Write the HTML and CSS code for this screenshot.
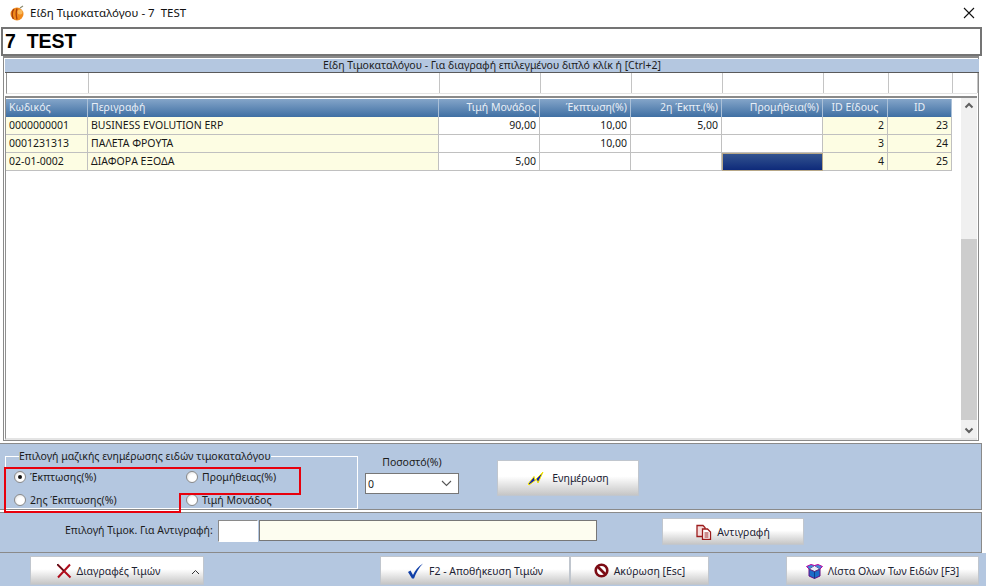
FILE: index.html
```html
<!DOCTYPE html>
<html lang="el">
<head>
<meta charset="utf-8">
<title>Είδη Τιμοκαταλόγου - 7 TEST</title>
<link rel="stylesheet" href="styles.css">
</head>
<body>
<div class="window">
  <header class="titlebar">
    <svg class="app-icon" width="16" height="16" viewBox="0 0 16 16"><circle cx="8" cy="9" r="6.5" fill="#f08a1c"/><path d="M5 4c-2 2-2.500 7-.5 10M8 3.500c-1 3-1 7 0 11" stroke="#a8400c" stroke-width="1.300" fill="none"/><circle cx="11" cy="7" r="2.500" fill="#f9b85a"/><path d="M11 3l3-2" stroke="#8a8a70" stroke-width="1.200"/></svg>
    <span class="title-text">Είδη Τιμοκαταλόγου - 7  TEST</span>
    <svg class="close" width="12" height="12" viewBox="0 0 12 12"><path d="M1 1l10 10M11 1L1 11" stroke="#111" stroke-width="1.100"/></svg>
  </header>
  <div class="heading">7  TEST</div>
  <section class="gridpanel">
    <div class="caption">Είδη Τιμοκαταλόγου - Για διαγραφή επιλεγμένου διπλό κλίκ ή [Ctrl+2]</div>
    <div class="filters">
      <span></span><span></span><span></span><span></span><span></span><span></span><span></span><span></span><span></span>
    </div>
    <div class="gridbody">
      <div class="table">
        <div class="row head">
          <span class="cell">Κωδικός</span><span class="cell">Περιγραφή</span><span class="cell num">Τιμή Μονάδος</span><span class="cell num">Έκπτωση(%)</span><span class="cell num">2η Έκπτ.(%)</span><span class="cell num">Προμήθεια(%)</span><span class="cell ctr">ID Είδους</span><span class="cell ctr">ID</span>
        </div>
        <div class="row">
          <span class="cell ro">0000000001</span><span class="cell ro">BUSINESS EVOLUTION ERP</span><span class="cell num">90,00</span><span class="cell num">10,00</span><span class="cell num">5,00</span><span class="cell num"></span><span class="cell num ro">2</span><span class="cell num ro">23</span>
        </div>
        <div class="row">
          <span class="cell ro">0001231313</span><span class="cell ro">ΠΑΛΕΤΑ ΦΡΟΥΤΑ</span><span class="cell num"></span><span class="cell num">10,00</span><span class="cell num"></span><span class="cell num"></span><span class="cell num ro">3</span><span class="cell num ro">24</span>
        </div>
        <div class="row">
          <span class="cell ro">02-01-0002</span><span class="cell ro">ΔΙΑΦΟΡΑ ΕΞΟΔΑ</span><span class="cell num">5,00</span><span class="cell num"></span><span class="cell num"></span><span class="cell num selected"></span><span class="cell num ro">4</span><span class="cell num ro">25</span>
        </div>
      </div>
      <div class="scrollbar">
        <svg class="chev" width="16" height="16" viewBox="0 0 16 16"><path d="M4.500 9.500L8 6l3.500 3.500" stroke="#606060" stroke-width="2" fill="none"/></svg>
        <div class="track"><div class="thumb"></div></div>
        <svg class="chev" width="16" height="16" viewBox="0 0 16 16"><path d="M4.500 6.500L8 10l3.500-3.500" stroke="#606060" stroke-width="2" fill="none"/></svg>
      </div>
    </div>
  </section>
  <section class="panel update">
    <fieldset class="mass">
      <legend>Επιλογή μαζικής ενημέρωσης ειδών τιμοκαταλόγου</legend>
      <label class="opt"><span class="radio on"></span>Έκπτωσης(%)</label>
      <label class="opt"><span class="radio"></span>Προμήθειας(%)</label>
      <label class="opt"><span class="radio"></span>2ης Έκπτωσης(%)</label>
      <label class="opt"><span class="radio"></span>Τιμή Μονάδος</label>
      <svg class="redmark" width="300" height="48" viewBox="0 0 300 48"><path d="M1 1H296V27H176V45H1Z" fill="none" stroke="#e8000c" stroke-width="2"/></svg>
    </fieldset>
    <div class="percent">
      <span class="percent-label">Ποσοστό(%)</span>
      <div class="select">0<svg width="11" height="7" viewBox="0 0 11 7"><path d="M1 1l4.500 4.500L10 1" stroke="#555" stroke-width="1.100" fill="none"/></svg></div>
    </div>
    <button class="btn btn-update">
      <svg width="18" height="16" viewBox="0 0 18 16"><path d="M1 14L7 6.500l1 3.500L16 2l-5 11-1.500-3.500L2 15z" fill="#1420b0" stroke="#f5e800" stroke-width="1"/></svg>
      Ενημέρωση
    </button>
  </section>
  <section class="panel copy">
    <span class="copy-label">Επιλογή Τιμοκ. Για Αντιγραφή:</span>
    <span class="code-input"></span>
    <span class="name-input"></span>
    <button class="btn btn-copy">
      <svg width="16" height="16" viewBox="0 0 16 16"><path d="M1 1.500h6l2 2v9H1z" fill="#f6dcdc" stroke="#9c1c1c" stroke-width="1.300"/><path d="M6.500 5h5l3 3v7.500h-8z" fill="#fff" stroke="#9c1c1c" stroke-width="1.300"/><path d="M8.500 9h4M8.500 11h4M8.500 13h4" stroke="#9c1c1c"/></svg>
      Αντιγραφή
    </button>
  </section>
  <footer class="footer">
    <button class="btn btn-delete">
      <svg width="16" height="16" viewBox="0 0 16 16"><path d="M1.500 1.500l13 13M14 1.500L2 14.500" stroke="#b00c1c" stroke-width="2"/><path d="M1 1l7 7" stroke="#222" stroke-width="1"/></svg>
      <span>Διαγραφές Τιμών</span>
      <svg class="caret" width="9" height="6" viewBox="0 0 9 6"><path d="M1 5l3.500-3.500L8 5" stroke="#333" fill="none"/></svg>
    </button>
    <button class="btn btn-save">
      <svg width="17" height="16" viewBox="0 0 17 16"><path d="M1 9l2.500-1.500L6 12C8 7.500 11 3.500 16 0.500 11.500 5 9 10 7 15.500H5z" fill="#0f3fa8"/></svg>
      F2 - Αποθήκευση Τιμών
    </button>
    <button class="btn btn-cancel">
      <svg width="15" height="15" viewBox="0 0 15 15"><circle cx="7.500" cy="7.500" r="5.800" fill="#fff" stroke="#7c0c14" stroke-width="2.600"/><path d="M3.500 3.500l8 8" stroke="#7c0c14" stroke-width="2.600"/></svg>
      Ακύρωση [Esc]
    </button>
    <button class="btn btn-list">
      <svg width="17" height="16" viewBox="0 0 17 16"><path d="M3 6l5.500 2.500L14 6v7l-5.500 2.500L3 13z" fill="#1c6cc8" stroke="#6a0a80"/><path d="M3 6l5.500-3.500L14 6 8.500 8.500z" fill="#e8eef8" stroke="#5a2a80"/><path d="M3 6L0.500 3.500 5 1.500 8.500 2.500M14 6l2.500-2.500L12 1.500 8.500 2.500" fill="#3c8ad8" stroke="#c000a0"/><path d="M8.500 8.500v7" stroke="#0c3c88"/></svg>
      Λίστα Ολων Των Ειδών [F3]
    </button>
  </footer>
</div>
</body>
</html>
```
FILE: styles.css
```css
* { box-sizing: border-box; }
html, body { margin: 0; padding: 0; background: #fff; }
body { font-family: "Noto Sans", "Liberation Sans", sans-serif; font-size: 10.500px; color: #1c1c1c; }
.window { width: 986px; height: 586px; display: flex; flex-direction: column; overflow: hidden; position: relative; background: #fff; }

.titlebar { height: 27px; flex: none; display: flex; align-items: center; padding: 0 11px 2px 9px; gap: 5px; }
.title-text { font-family: "Noto Sans", sans-serif; font-size: 11.500px; white-space: pre; color: #111; }
.close { margin-left: auto; }

.heading { flex: none; height: 29px; margin: 0 4px 0 1px; border: 2px solid #747474; border-right-width: 2px; background: #fff; font-family: "Liberation Sans", sans-serif; font-weight: 700; font-size: 19.500px; line-height: 24px; padding-left: 2px; white-space: pre; color: #000; }

.gridpanel { flex: none; height: 385px; margin: 0 7px 0 3px; border: 1px solid #8a8a8a; border-top: 2px solid #8a8a8a; padding: 1px 0 0 1px; display: flex; flex-direction: column; box-shadow: inset 0 0 0 1px #fff; }
.caption { height: 14px; flex: none; margin-right: -1px; background: #b4c7e0; border-bottom: 1px solid #5a5a5a; text-align: center; line-height: 13px; font-size: 10.500px; }
.filters { height: 21px; flex: none; display: grid; grid-template-columns: 82px 351px 101px 91px 91px 101px 65px 64px 25px; margin-left: 1px; margin-right: 1px; border-bottom: 1px solid #e4e4e4; border-left: 1px solid #909090; }
.filters span { border-right: 1px solid #c4c4c4; }
.gridbody { flex: 1; min-height: 0; display: flex; margin-top: 2px; border-top: 2px solid #8a8a8a; border-left: 1px solid #909090; border-bottom: 2px solid #e4e4e4; margin-left: 0; padding-top: 1px; margin-right: 1px; }
.table { width: 947px; flex: none; }
.row { display: grid; grid-template-columns: 82px 351px 101px 91px 91px 101px 65px 64px; height: 18px; }
.cell { border-right: 1px solid #c0c0c0; border-bottom: 1px solid #c0c0c0; line-height: 17px; padding: 0 3px; white-space: nowrap; overflow: hidden; color: #181818; }
.num { text-align: right; padding-right: 3px; }
.ctr { text-align: center; }
.ro { background: #fdfde3; }
.head .cell { background: linear-gradient(#84a5c9, #3f6fa3); color: #e8eef6; border-bottom: 0; border-right: 1px solid #aac0d8; }
.selected { background: linear-gradient(#33538f, #0e2a7a); border: 1px solid #b8a888; }

.scrollbar { width: 16px; flex: none; margin-left: 8px; margin-top: -1px; background: #f0f0f0; display: flex; flex-direction: column; }
.chev { flex: none; }
.track { flex: 1; display: flex; flex-direction: column; justify-content: flex-end; padding-bottom: 2px; }
.thumb { height: 181px; background: #cdcdcd; }

.panel { flex: none; margin: 0 4px 0 0; background: #b4c7e0; border: 1px solid #8a8a8a; border-left: 0; display: flex; }
.update { height: 67px; margin-top: 2px; padding: 7px 0 0 5px; box-shadow: 0 1px 0 #fff; }
.copy { height: 41px; margin-top: 2px; align-items: flex-start; padding-top: 7px; }

.mass { position: relative; width: 353px; height: 58px; margin: 0; padding: 4px 0 0 8px; border: 1px solid #fff; outline: 0; display: grid; grid-template-columns: 172px 160px; grid-auto-rows: 23px; align-content: start; min-width: 0; }
.mass legend { padding: 0; margin-left: 5px; line-height: 10px; font-size: 10.500px; }
.opt { display: flex; align-items: center; gap: 4px; }
.radio { width: 12px; height: 12px; border-radius: 50%; background: radial-gradient(circle at 60% 60%, #fff 40%, #d8d8d8); border: 1px solid #8a8a8a; display: flex; align-items: center; justify-content: center; }
.radio.on::after { content: ""; width: 4px; height: 4px; border-radius: 50%; background: #111; }
.redmark { position: absolute; left: -2px; top: 6px; pointer-events: none; }

.percent { margin-left: 7px; width: 94px; display: flex; flex-direction: column; align-items: center; padding-top: 4px; }
.percent-label { line-height: 14px; margin-bottom: 4px; }
.select { width: 94px; height: 21px; background: #fff; border: 1px solid #777; display: flex; align-items: center; justify-content: space-between; padding: 0 6px 0 2px; }

.btn { font: inherit; color: #1c2233; border: 1px solid #c0c6ce; background: linear-gradient(#fff 45%, #c6c6c6); display: flex; align-items: center; justify-content: center; padding: 0; gap: 5px; }
.btn-update { width: 142px; height: 36px; margin: 9px 0 0 38px; gap: 7px; }

.copy-label { margin-left: 65px; width: 153px; line-height: 21px; }
.code-input { width: 40px; height: 22px; background: #fff; border: 1px solid #8a8a8a; border-right-color: #fff; border-bottom-color: #fff; }
.name-input { width: 338px; height: 21px; margin-left: 1px; background: #fdfdf0; border: 1px solid #777; }
.btn-copy { width: 142px; height: 27px; margin: -2px 0 0 65px; gap: 5px; }

.footer { flex: 1; margin: 0; background: #b4c7e0; display: flex; padding-top: 3px; padding-left: 30px; align-items: flex-start; }
.footer .btn { height: 29px; }
.btn-delete { width: 174px; position: relative; padding-right: 18px; }
.caret { position: absolute; right: 3px; top: 12px; }
.btn-save { width: 190px; margin-left: 176px; }
.btn-cancel { width: 139px; margin-left: 0; }
.btn-list { width: 193px; margin-left: 77px; }
```
